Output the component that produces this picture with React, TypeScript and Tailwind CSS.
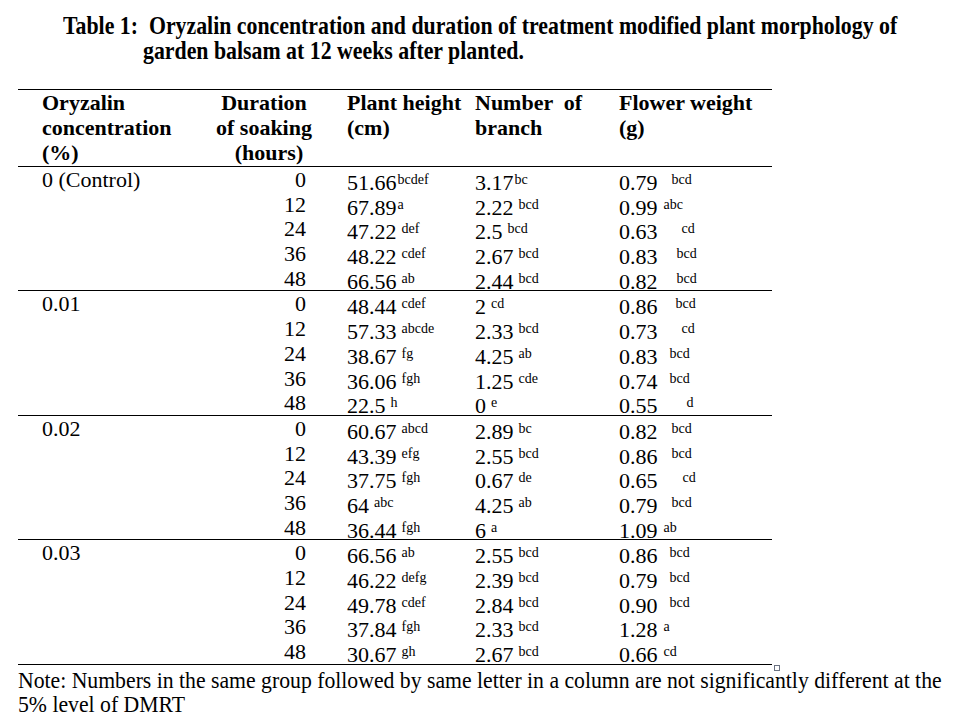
import React from 'react';

type Cell = { v: string; s: string; gap: string };
type Row = { dur: string; h: Cell; b: Cell; w: Cell };
type Group = { conc: string; rows: Row[] };

const c = (v: string, s: string, gap = 'ml-[5px]'): Cell => ({ v, s, gap });

const groups: Group[] = [
  {
    conc: '0 (Control)',
    rows: [
      { dur: '0', h: c('51.66', 'bcdef', 'ml-[1px]'), b: c('3.17', 'bc', 'ml-[1px]'), w: c('0.79', 'bcd', 'ml-[14px]') },
      { dur: '12', h: c('67.89', 'a', 'ml-[1px]'), b: c('2.22', 'bcd'), w: c('0.99', 'abc', 'ml-[6px]') },
      { dur: '24', h: c('47.22', 'def'), b: c('2.5', 'bcd'), w: c('0.63', 'cd', 'ml-[24px]') },
      { dur: '36', h: c('48.22', 'cdef'), b: c('2.67', 'bcd'), w: c('0.83', 'bcd', 'ml-[19px]') },
      { dur: '48', h: c('66.56', 'ab'), b: c('2.44', 'bcd'), w: c('0.82', 'bcd', 'ml-[19px]') },
    ],
  },
  {
    conc: '0.01',
    rows: [
      { dur: '0', h: c('48.44', 'cdef'), b: c('2', 'cd'), w: c('0.86', 'bcd', 'ml-[18px]') },
      { dur: '12', h: c('57.33', 'abcde'), b: c('2.33', 'bcd'), w: c('0.73', 'cd', 'ml-[24px]') },
      { dur: '24', h: c('38.67', 'fg'), b: c('4.25', 'ab'), w: c('0.83', 'bcd', 'ml-[12px]') },
      { dur: '36', h: c('36.06', 'fgh'), b: c('1.25', 'cde'), w: c('0.74', 'bcd', 'ml-[12px]') },
      { dur: '48', h: c('22.5', 'h'), b: c('0', 'e'), w: c('0.55', 'd', 'ml-[29px]') },
    ],
  },
  {
    conc: '0.02',
    rows: [
      { dur: '0', h: c('60.67', 'abcd'), b: c('2.89', 'bc'), w: c('0.82', 'bcd', 'ml-[14px]') },
      { dur: '12', h: c('43.39', 'efg'), b: c('2.55', 'bcd'), w: c('0.86', 'bcd', 'ml-[14px]') },
      { dur: '24', h: c('37.75', 'fgh'), b: c('0.67', 'de'), w: c('0.65', 'cd', 'ml-[25px]') },
      { dur: '36', h: c('64', 'abc'), b: c('4.25', 'ab'), w: c('0.79', 'bcd', 'ml-[14px]') },
      { dur: '48', h: c('36.44', 'fgh'), b: c('6', 'a'), w: c('1.09', 'ab', 'ml-[6px]') },
    ],
  },
  {
    conc: '0.03',
    rows: [
      { dur: '0', h: c('66.56', 'ab'), b: c('2.55', 'bcd'), w: c('0.86', 'bcd', 'ml-[12px]') },
      { dur: '12', h: c('46.22', 'defg'), b: c('2.39', 'bcd'), w: c('0.79', 'bcd', 'ml-[12px]') },
      { dur: '24', h: c('49.78', 'cdef'), b: c('2.84', 'bcd'), w: c('0.90', 'bcd', 'ml-[12px]') },
      { dur: '36', h: c('37.84', 'fgh'), b: c('2.33', 'bcd'), w: c('1.28', 'a', 'ml-[6px]') },
      { dur: '48', h: c('30.67', 'gh'), b: c('2.67', 'bcd'), w: c('0.66', 'cd', 'ml-[6px]') },
    ],
  },
];

function Val({ cell }: { cell: Cell }) {
  return (
    <span className="whitespace-nowrap">
      {cell.v}
      <span className={`${cell.gap} text-[14px] align-[6px]`}>{cell.s}</span>
    </span>
  );
}

export default function App() {
  return (
    <div className="w-[958px] h-[722px] bg-white text-black overflow-hidden font-['Liberation_Serif',serif]">
      {/* Title */}
      <div className="pt-[13px] font-bold text-[25px] leading-[25px] whitespace-nowrap">
        <div className="pl-[63px]">
          <span className="inline-block origin-left scale-x-[0.873]">
            Table 1:&nbsp; Oryzalin concentration and duration of treatment modified plant morphology of
          </span>
        </div>
        <div className="pl-[143px]">
          <span className="inline-block origin-left scale-x-[0.873]">garden balsam at 12 weeks after planted.</span>
        </div>
      </div>

      {/* Table */}
      <div className="relative ml-[18px] mt-[26px] w-[754px] border-t border-b border-black text-[22px] leading-[25px]">
        <div className="grid grid-cols-[182px_147px_128px_144px_153px] h-[77px] border-b border-black font-bold">
          <div className="pl-[24px]">
            Oryzalin
            <br />
            concentration
            <br />
            (%)
          </div>
          <div className="text-center pr-[19px]">
            Duration
            <br />
            of soaking
            <br />
            <span className="pl-[10px]">(hours)</span>
          </div>
          <div>
            Plant height
            <br />
            (cm)
          </div>
          <div className="whitespace-pre">
            {'Number  of'}
            <br />
            branch
          </div>
          <div>
            Flower weight
            <br />
            (g)
          </div>
        </div>

        {groups.map((g, gi) => (
          <div key={gi} className={gi < groups.length - 1 ? 'border-b border-black' : ''}>
            {g.rows.map((r, ri) => (
              <div key={ri} className="grid grid-cols-[182px_147px_128px_144px_153px] h-[24.7px]">
                <div className="pl-[24px]">{ri === 0 ? g.conc : ''}</div>
                <div className="text-right pr-[41px]">{r.dur}</div>
                <div>
                  <Val cell={r.h} />
                </div>
                <div>
                  <Val cell={r.b} />
                </div>
                <div className="whitespace-nowrap">
                  <span className="inline-block w-[38.5px]">{r.w.v}</span>
                  <span className={`${r.w.gap} text-[14px] align-[6px]`}>{r.w.s}</span>
                </div>
              </div>
            ))}
          </div>
        ))}

        <span className="absolute right-[-8px] bottom-[-7px] w-[6px] h-[6px] border border-gray-500" />
      </div>

      {/* Note */}
      <div className="pl-[18px] pt-[3px] text-[24px] leading-[24px] whitespace-nowrap">
        <div>
          <span className="inline-block origin-left scale-x-[0.905]">
            Note: Numbers in the same group followed by same letter in a column are not significantly different at the
          </span>
        </div>
        <div>
          <span className="inline-block origin-left scale-x-[0.905]">5% level of DMRT</span>
        </div>
      </div>
    </div>
  );
}
